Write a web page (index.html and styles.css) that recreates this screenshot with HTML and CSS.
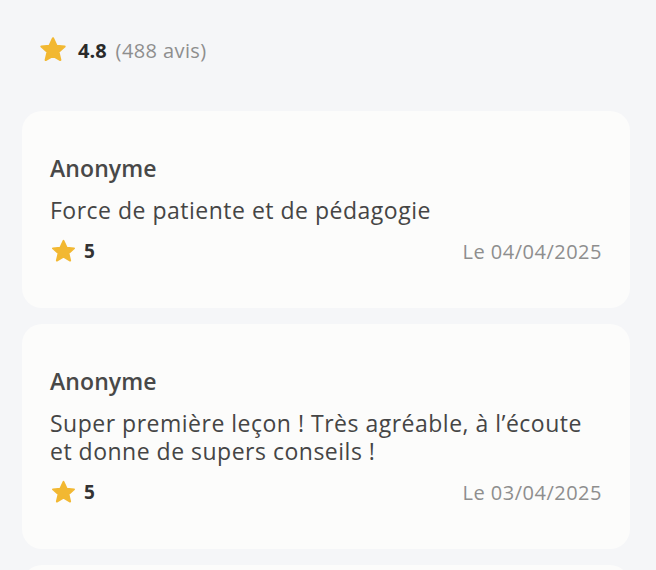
FILE: index.html
```html
<!DOCTYPE html>
<html lang="fr">
<head>
<meta charset="utf-8">
<link rel="stylesheet" href="styles.css">
</head>
<body>
<div class="page">
  <div class="summary">
    <svg class="star star-lg" viewBox="0 0 24 24"><path d="M12 3.2l2.6 5.6 6.1.6-4.6 4.1 1.4 6-5.5-3.2-5.5 3.2 1.4-6-4.6-4.1 6.1-.6z"/></svg>
    <span class="avg">4.8</span>
    <span class="count">(488 avis)</span>
  </div>
  <div class="list">
    <div class="card">
      <div class="author">Anonyme</div>
      <p class="text">Force de patiente et de pédagogie</p>
      <div class="meta">
        <div class="rating">
          <svg class="star star-sm" viewBox="0 0 24 24"><path d="M12 3.2l2.6 5.6 6.1.6-4.6 4.1 1.4 6-5.5-3.2-5.5 3.2 1.4-6-4.6-4.1 6.1-.6z"/></svg>
          <span class="score">5</span>
        </div>
        <span class="date">Le 04/04/2025</span>
      </div>
    </div>
    <div class="card">
      <div class="author">Anonyme</div>
      <p class="text">Super première leçon ! Très agréable, à l’écoute et donne de supers conseils !</p>
      <div class="meta">
        <div class="rating">
          <svg class="star star-sm" viewBox="0 0 24 24"><path d="M12 3.2l2.6 5.6 6.1.6-4.6 4.1 1.4 6-5.5-3.2-5.5 3.2 1.4-6-4.6-4.1 6.1-.6z"/></svg>
          <span class="score">5</span>
        </div>
        <span class="date">Le 03/04/2025</span>
      </div>
    </div>
    <div class="card"></div>
  </div>
</div>
</body>
</html>
```
FILE: styles.css
```css
* { box-sizing: border-box; }
html, body {
  margin: 0;
  padding: 0;
  background: #f5f6f8;
  font-family: "Open Sans", "Noto Sans", sans-serif;
  color: #444;
}
.page {
  padding: 36px 26px 0 22px;
  height: 570px;
  overflow: hidden;
}
.summary {
  display: flex;
  align-items: center;
  padding-left: 15px;
  height: 28px;
  margin-bottom: 47px;
}
.star path {
  fill: #f2b832;
  stroke: #f2b832;
  stroke-width: 1.6;
  stroke-linejoin: round;
}
.star-lg { width: 32px; height: 32px; flex: none; }
.avg {
  margin-left: 9px;
  font-size: 20px;
  font-weight: 700;
  color: #2a2a2a;
}
.count {
  margin-left: 9px;
  font-size: 20px;
  letter-spacing: 0.4px;
  color: #8e8e8e;
}
.list {
  display: flex;
  flex-direction: column;
  gap: 16px;
}
.card {
  background: #fcfcfb;
  border-radius: 20px;
  padding: 41px 28px 41px 28px;
}
.author {
  font-size: 23px;
  font-weight: 600;
  color: #484848;
  line-height: 32px;
  letter-spacing: 0.1px;
}
.text {
  margin: 12px 0 0;
  font-size: 23px;
  line-height: 28px;
  letter-spacing: 0.5px;
  color: #454545;
}
.meta {
  display: flex;
  align-items: center;
  justify-content: space-between;
  margin-top: 11px;
  height: 32px;
}
.rating {
  display: flex;
  align-items: center;
}
.star-sm { width: 29px; height: 29px; margin-left: -1px; flex: none; }
.score {
  margin-left: 6px;
  font-size: 19px;
  font-weight: 700;
  color: #333;
}
.date {
  font-size: 20px;
  letter-spacing: 0.5px;
  color: #8e8e8e;
}
```
